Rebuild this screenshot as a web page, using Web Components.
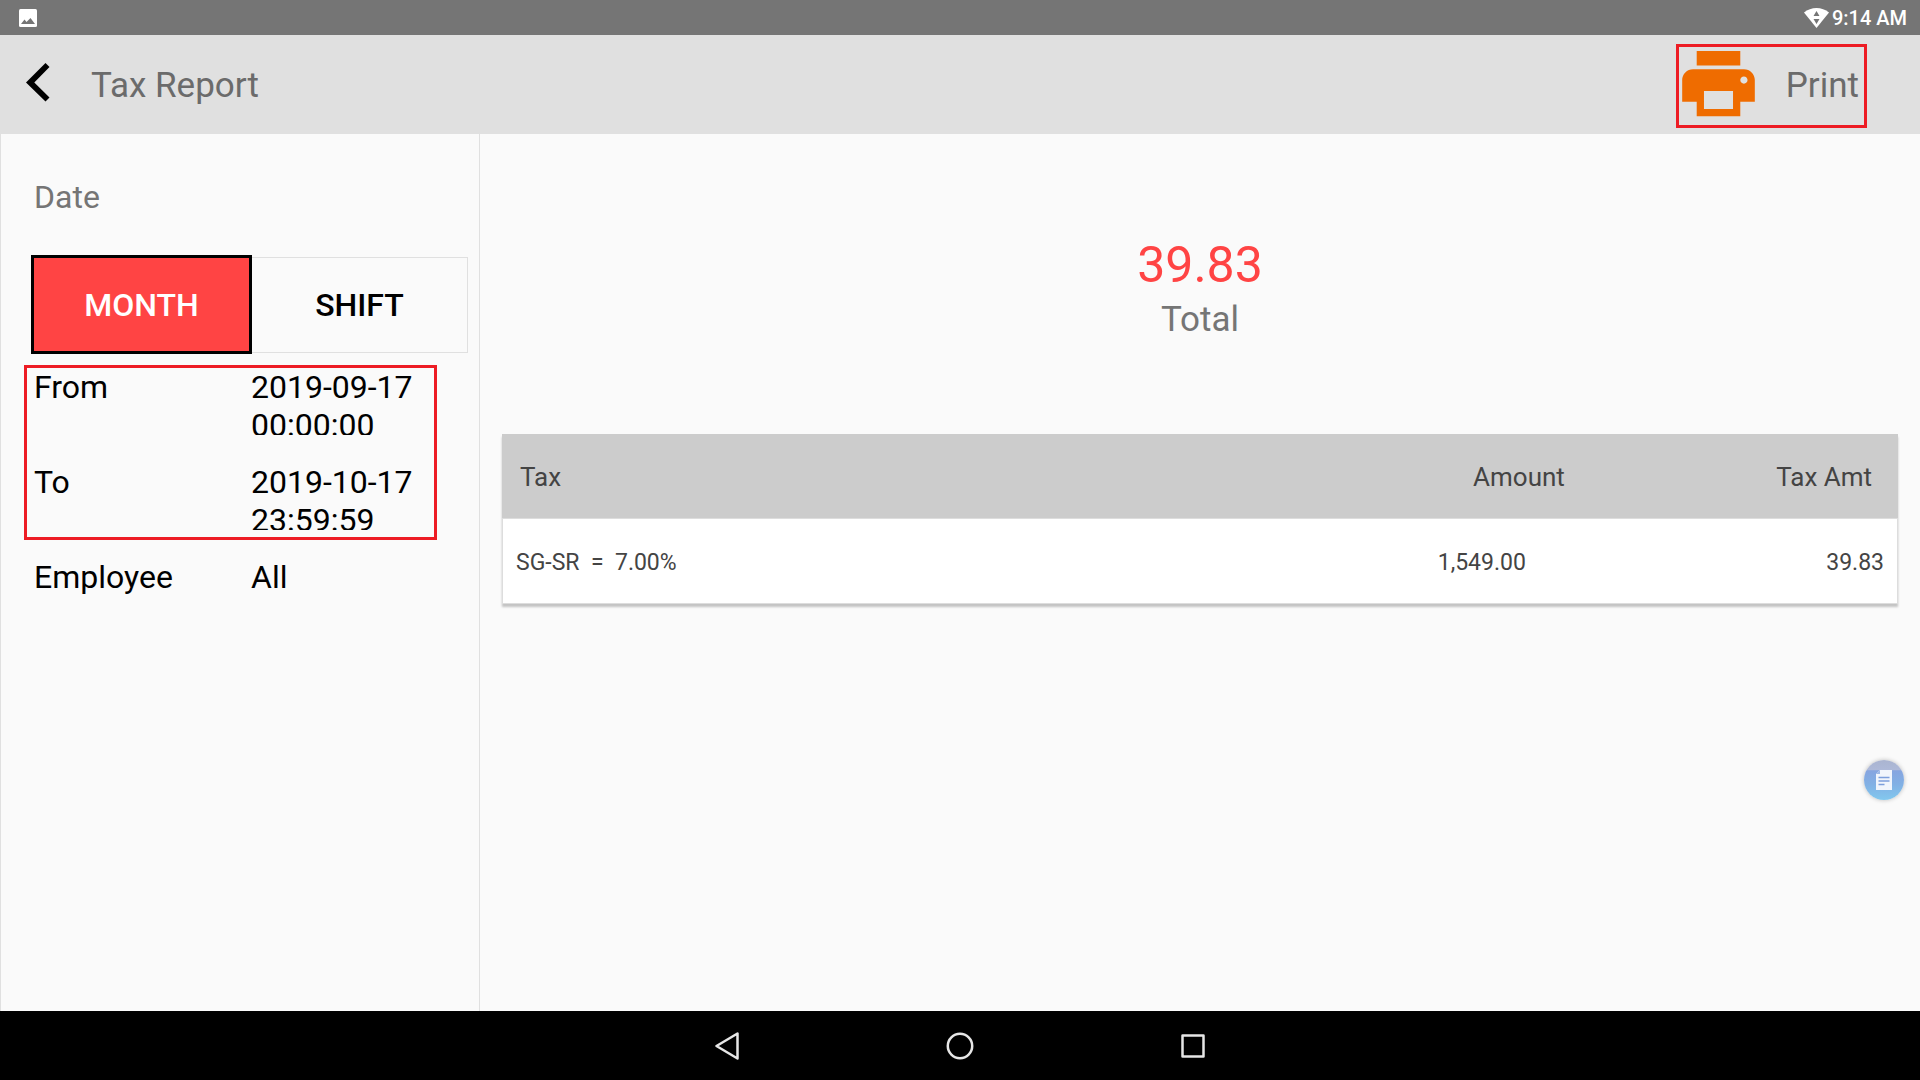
<!DOCTYPE html>
<html lang="en">
<head>
<meta charset="utf-8">
<title>Tax Report</title>
<style>
  body {
    margin: 0;
    font-family: Roboto, "Liberation Sans", sans-serif;
    background: #fafafa;
    color: #000;
  }
</style>
</head>
<body>
<pos-app>
  <status-bar slot="status" data-time="9:14 AM"></status-bar>
  <app-bar slot="header" data-title="Tax Report"></app-bar>
  <filter-panel slot="side">
    <filter-row slot="range" data-label="From">2019-09-17 00:00:00</filter-row>
    <filter-row slot="range" data-label="To">2019-10-17 23:59:59</filter-row>
    <filter-row data-label="Employee">All</filter-row>
  </filter-panel>
  <report-total data-label="Total">39.83</report-total>
  <tax-table></tax-table>
  <float-button slot="float"></float-button>
  <nav-bar slot="nav"></nav-bar>
</pos-app>

<script>
// attach an open shadow root and fill it from a template
function stamp(el, html) {
  const template = document.createElement("template");
  template.innerHTML = html;
  el.attachShadow({ mode: "open" });
  el.shadowRoot.appendChild(template.content.cloneNode(true));
}

// page frame: bars on top and bottom, side panel and report between
class PosApp extends HTMLElement {
  constructor() {
    super();
    stamp(this, `
<style>
  :host { display: flex; flex-direction: column; min-height: 100vh; }
  .body { flex: 1; display: grid; grid-template-columns: 1fr 3fr; }
  main { padding: 0 22px; }
</style>
<slot name="status"></slot>
<slot name="header"></slot>
<div class="body">
  <slot name="side"></slot>
  <main><slot></slot></main>
</div>
<slot name="nav"></slot>
<slot name="float"></slot>`);
  }
}

class StatusBar extends HTMLElement {
  constructor() {
    super();
    stamp(this, `
<style>
  :host {
    display: flex; align-items: center; justify-content: space-between;
    height: 35px; padding: 0 13px 0 19px;
    background: #757575; color: #fff;
    font-size: 20px; font-weight: 500;
  }
  .right { display: flex; align-items: center; gap: 3px; }
  svg { display: block; }
</style>
<svg width="18" height="18" viewBox="0 0 18 18">
  <rect width="18" height="18" rx="1.500" fill="#fff"/>
  <path d="M2 15l3.500-4.500 2 2.500L11.500 9l4.500 6z" fill="#757575"/>
</svg>
<div class="right">
  <svg width="25" height="20" viewBox="0 0 25 20">
    <path d="M0 4.500C7-1.500 18-1.500 25 4.500L12.500 20z" fill="#fff"/>
    <path d="M12.500 3l3 5h-6zM9.500 11h6l-3 5z" fill="#757575"/>
  </svg>
  <time></time>
</div>`);
  }

  connectedCallback() {
    this.shadowRoot.querySelector("time").textContent = this.dataset.time;
  }
}

class AppBar extends HTMLElement {
  constructor() {
    super();
    stamp(this, `
<style>
  :host {
    display: flex; align-items: center; box-sizing: border-box;
    height: 99px; padding: 2px 53px 0 26px;
    background: #e0e0e0; color: #6b6b6b;
  }
  h1 { flex: 1; margin: 0 0 0 41px; font-size: 35px; font-weight: 400; line-height: 42px; }
  button { font: inherit; color: inherit; background: none; border: 0; padding: 0; cursor: pointer; }
  svg { display: block; }
  .print {
    display: flex; align-items: center; gap: 31px;
    box-sizing: border-box; height: 84px; margin-top: 1px; padding: 0 5px 1px 3px;
    border: 3px solid #ed1c24;
    font-size: 35px; line-height: 42px;
  }
</style>
<button class="back" aria-label="Back">
  <svg width="24" height="45" viewBox="0 0 24 45"><path d="M19.500 0l4 4L8.300 19.500l15.200 15-4 4L0 19.500z"/></svg>
</button>
<h1></h1>
<button class="print">
  <svg width="73" height="69" viewBox="2 3 20 19" fill="#ef6c00">
    <path d="M19 8H5c-1.660 0-3 1.340-3 3v6h4v4h12v-4h4v-6c0-1.660-1.340-3-3-3zm-3 11H8v-5h8v5zm3-7c-.550 0-1-.450-1-1s.450-1 1-1 1 .450 1 1-.450 1-1 1zm-1-9H6v4h12V3z"/>
  </svg>
  Print
</button>`);
  }

  connectedCallback() {
    this.shadowRoot.querySelector("h1").textContent = this.dataset.title;
  }
}

// left column: date mode, range and employee
class FilterPanel extends HTMLElement {
  constructor() {
    super();
    stamp(this, `
<style>
  :host {
    display: block; padding: 44px 11px 44px 23px;
    border: 1px solid #e0e0e0; border-width: 0 1px;
    font-size: 32px; line-height: 38px;
  }
  h2 { margin: 0 0 39px 10px; font: inherit; color: #757575; }
  .modes { display: grid; grid-template-columns: 221px 1fr; align-items: center; margin-left: 7px; }
  button {
    height: 96px; padding: 0; font: inherit; font-weight: 500; color: #000;
    background: #fafafa; border: 1px solid #e0e0e0; border-left: 0; cursor: pointer;
  }
  button[aria-pressed="true"] { height: 99px; color: #fff; background: #f44; border: 3px solid #000; }
  .range {
    display: grid; gap: 28px; margin: 11px 31px 18px 0; padding: 0 0 7px 7px;
    border: 3px solid #ed1c24;
  }
  .more { padding-left: 10px; }
</style>
<h2>Date</h2>
<div class="modes">
  <button aria-pressed="true">MONTH</button>
  <button aria-pressed="false">SHIFT</button>
</div>
<div class="range"><slot name="range"></slot></div>
<div class="more"><slot></slot></div>`);
  }

  connectedCallback() {
    const buttons = this.shadowRoot.querySelectorAll("button");
    buttons.forEach((b) => {
      b.onclick = () => buttons.forEach((o) => o.setAttribute("aria-pressed", o === b));
    });
  }
}

class FilterRow extends HTMLElement {
  constructor() {
    super();
    stamp(this, `
<style>
  :host { display: grid; grid-template-columns: 217px 1fr; height: 67px; overflow: hidden; }
</style>
<span class="label"></span>
<span><slot></slot></span>`);
  }

  connectedCallback() {
    this.shadowRoot.querySelector(".label").textContent = this.dataset.label;
  }
}

class ReportTotal extends HTMLElement {
  constructor() {
    super();
    stamp(this, `
<style>
  :host { display: block; padding: 100px 0 90px; text-align: center; }
  .value { font-size: 50px; line-height: 62px; color: #f44; }
  .label { font-size: 35px; line-height: 48px; color: #757575; }
</style>
<div class="value"><slot></slot></div>
<div class="label"></div>`);
  }

  connectedCallback() {
    this.shadowRoot.querySelector(".label").textContent = this.dataset.label;
  }
}

class TaxTable extends HTMLElement {
  constructor() {
    super();
    stamp(this, `
<style>
  :host { display: block; color: #444; }
  table {
    width: 100%; table-layout: fixed; border-spacing: 0;
    background: #fff; box-shadow: 0 3px 2px #c4c4c4;
  }
  th, td { box-sizing: border-box; padding: 2px 0 0; text-align: right; white-space: pre; }
  th { height: 84px; background: #ccc; font-size: 26px; font-weight: 400; padding-right: 26px; }
  td { height: 86px; font-size: 23px; border: 1px solid #ddd; border-width: 1px 0; }
  th:first-child, td:first-child { text-align: left; }
  th:first-child { padding-left: 18px; }
  td:first-child { padding-left: 13px; border-left-width: 1px; }
  td:nth-child(2) { padding-right: 65px; }
  td:last-child { padding-right: 13px; border-right-width: 1px; }
  .wide { width: 56%; }
  .num { width: 22%; }
</style>
<table>
  <colgroup><col class="wide"><col class="num"><col class="num"></colgroup>
  <thead><tr><th>Tax</th><th>Amount</th><th>Tax Amt</th></tr></thead>
  <tbody><tr><td>SG-SR  =  7.00%</td><td>1,549.00</td><td>39.83</td></tr></tbody>
</table>`);
  }
}

// floating shortcut that stays over the page
class FloatButton extends HTMLElement {
  constructor() {
    super();
    stamp(this, `
<style>
  :host { position: fixed; right: 16px; bottom: 280px; }
  button {
    display: grid; place-items: center; width: 40px; height: 40px; padding: 0;
    border: 0; border-radius: 50%; cursor: pointer;
    background: linear-gradient(#aab4d0 0, #aeb9d8 24%, #86a5e0 27%, #82b0e4 60%, #82c8ee 100%);
    box-shadow: 0 0 4px #bbb;
  }
</style>
<button aria-label="Notes">
  <svg width="16" height="20" viewBox="0 0 16 20">
    <path d="M4 0h12v20H0V4z" fill="#f1f5fc"/>
    <path d="M4 0v4H0z" fill="#9db8e6"/>
    <path d="M2.500 7.500h11M2.500 11h11M2.500 14.500h6" stroke="#7d9fdc" stroke-width="1.500"/>
  </svg>
</button>`);
  }
}

class NavBar extends HTMLElement {
  constructor() {
    super();
    stamp(this, `
<style>
  :host { display: flex; justify-content: center; align-items: center; gap: 193px; height: 69px; background: #000; }
  button { width: 40px; height: 40px; padding: 0; border: 0; background: none; cursor: pointer; }
  svg { display: block; margin: auto; fill: none; stroke: #e6e6e6; stroke-width: 2.500; stroke-linejoin: round; }
</style>
<button aria-label="Back"><svg width="28" height="28" viewBox="0 0 28 28"><path d="M24.500 1.500v25L3.500 14z"/></svg></button>
<button aria-label="Home"><svg width="28" height="28" viewBox="0 0 28 28"><circle cx="14" cy="14" r="12.200"/></svg></button>
<button aria-label="Recents"><svg width="28" height="28" viewBox="0 0 28 28"><path d="M3.500 3.500h21v21h-21z"/></svg></button>`);
  }
}

customElements.define("pos-app", PosApp);
customElements.define("status-bar", StatusBar);
customElements.define("app-bar", AppBar);
customElements.define("filter-panel", FilterPanel);
customElements.define("filter-row", FilterRow);
customElements.define("report-total", ReportTotal);
customElements.define("tax-table", TaxTable);
customElements.define("float-button", FloatButton);
customElements.define("nav-bar", NavBar);
</script>
</body>
</html>
